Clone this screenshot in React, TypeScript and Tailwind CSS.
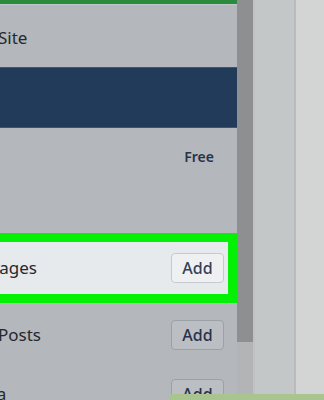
import React from "react";

const font = { fontFamily: '"Noto Sans", "Open Sans", sans-serif' };

function AddButton({ lit }: { lit?: boolean }) {
  return (
    <button
      className={
        lit
          ? "w-[53px] h-[30px] shrink-0 rounded-[4px] border border-[#c6cad0] bg-[#eef0f2] text-[16px] font-medium text-[#34405a] leading-none"
          : "w-[53px] h-[30px] shrink-0 rounded-[4px] border border-[#9ca1a8] bg-[#bbbec2] text-[16px] font-medium text-[#27324a] leading-none"
      }
    >
      Add
    </button>
  );
}

export default function App() {
  return (
    <div
      style={font}
      className="relative w-[324px] h-[400px] overflow-hidden flex bg-[#d2d3d4]"
    >
      <div className="w-[237px] shrink-0 flex flex-col bg-[#b4b7bb] overflow-hidden">
        <div className="h-[4px] shrink-0 bg-[#2b8b3b]" />
        <div className="h-[1px] shrink-0 bg-[#c2c6c9]" />
        <div className="h-[62px] shrink-0 flex items-center pt-[4px] text-[17px] text-[#25282d]">
          <span className="-ml-[2px]">Site</span>
        </div>
        <div className="h-[61px] shrink-0 bg-[#233b5a] border-y border-[#3e5471]" />
        <div className="h-[105px] shrink-0 flex justify-end pr-[23px] pt-[18px]">
          <span className="text-[14px] font-semibold text-[#28334a]">Free</span>
        </div>
        <div className="h-[70px] shrink-0 flex items-center justify-between border-y-[9px] border-r-[9px] border-[#04f004] bg-[#e7eaed] pr-[4px]">
          <span className="text-[17px] text-[#25282d] -ml-[11px]">Pages</span>
          <AddButton lit />
        </div>
        <div className="h-[60px] shrink-0 flex items-center justify-between pr-[13px] pt-[3px]">
          <span className="text-[17px] text-[#25282d] -ml-[2px]">Posts</span>
          <AddButton />
        </div>
        <div className="h-[60px] shrink-0 flex items-start pr-[13px] pt-[16px]">
          <div className="flex-1 flex items-center justify-between">
            <span className="text-[17px] text-[#25282d] -ml-[43px]">Media</span>
            <AddButton />
          </div>
        </div>
      </div>
      <div className="w-[16px] shrink-0 flex flex-col">
        <div className="h-[342px] shrink-0 bg-[#8e8f90]" />
        <div className="flex-1 bg-[#b2b4b6]" />
      </div>
      <div className="w-[43px] shrink-0 bg-[#c4c7c8] border-l-[2px] border-r-[2px] border-l-[#bfc1c2] border-r-[#b9bbbc]" />
      <div className="flex-1 bg-[#d3d4d4]" />
      <div className="absolute left-[170px] right-0 bottom-0 h-[6px] bg-[#a9c58f]" />
    </div>
  );
}
